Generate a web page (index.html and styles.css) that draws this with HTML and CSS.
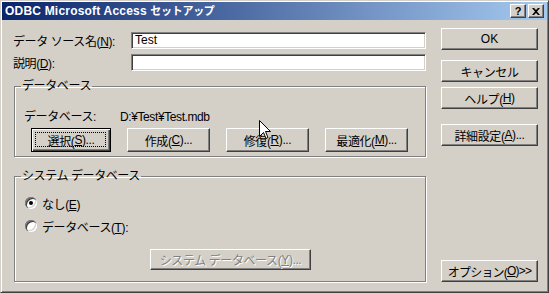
FILE: index.html
```html
<!DOCTYPE html>
<html lang="ja">
<head>
<meta charset="utf-8">
<title>ODBC Microsoft Access セットアップ</title>
<link rel="stylesheet" href="styles.css">
</head>
<body>
<div class="window">
  <div class="titlebar">
    <span class="title">ODBC Microsoft Access <span class="title-jp">セットアップ</span></span>
    <div class="tbtns">
      <span class="tbtn tbtn-help">?</span>
      <span class="tbtn"><svg width="8" height="7" viewBox="0 0 8 7"><path d="M0 0h2l2 2 2-2h2L5 3.5 8 7H6L4 5 2 7H0l3-3.5z" fill="#000"/></svg></span>
    </div>
  </div>
  <div class="client">
    <div class="main">
      <div class="field f1"><span class="flabel">データ ソース名(<u>N</u>):</span><div class="edit">Test</div></div>
      <div class="field f2"><span class="flabel">説明(<u>D</u>):</span><div class="edit"></div></div>
      <fieldset class="group g1">
        <legend>データベース</legend>
        <div class="dbrow"><span class="dblabel">データベース:</span><span class="dbpath">D:¥Test¥Test.mdb</span></div>
        <div class="btnrow">
          <span class="btn default w80">選択(<u>S</u>)...</span>
          <span class="btn w83">作成(<u>C</u>)...</span>
          <span class="btn w83">修復(<u>R</u>)...</span>
          <span class="btn w83">最適化(<u>M</u>)...</span>
        </div>
      </fieldset>
      <fieldset class="group g2">
        <legend>システム データベース</legend>
        <div class="radio-row r1"><span class="radio checked"></span><span>なし(<u>E</u>)</span></div>
        <div class="radio-row r2"><span class="radio"></span><span>データベース(<u>T</u>):</span></div>
        <span class="btn disabled sysdb">システム データベース(<u>Y</u>)...</span>
      </fieldset>
    </div>
    <div class="side">
      <span class="btn sb ok">OK</span>
      <span class="btn sb cancel">キャンセル</span>
      <span class="btn sb help">ヘルプ(<u>H</u>)</span>
      <span class="btn sb adv">詳細設定(<u>A</u>)...</span>
      <span class="btn sb opt">オプション(<u>O</u>)&gt;&gt;</span>
    </div>
  </div>
  <svg class="cursor" width="12" height="20" viewBox="0 0 12 20"><path d="M0.5 0.5V16.5L4.5 12.5L7 18.5L9 17.5L6.5 11.5H11.5Z" fill="#fff" stroke="#000" stroke-width="1" stroke-linejoin="miter"/></svg>
</div>
</body>
</html>
```

FILE: styles.css
```css
html, body {
  margin: 0;
  padding: 0;
  background: #d4d0c8;
}
body {
  font-family: "Liberation Sans", "Noto Sans CJK JP", sans-serif;
  font-size: 12px;
  color: #000;
}
u { text-decoration: underline; text-underline-offset: 1px; }

.window {
  position: relative;
  box-sizing: border-box;
  width: 549px;
  height: 293px;
  background: #d4d0c8;
  border: 1px solid;
  border-color: #d4d0c8 #404040 #404040 #d4d0c8;
  box-shadow: inset 1px 1px 0 #fff, inset -1px -1px 0 #808080;
  padding: 1px;
  overflow: hidden;
}

.titlebar {
  height: 18px;
  display: flex;
  align-items: center;
  justify-content: space-between;
  background: linear-gradient(to right, #0a246a, #a6caf0);
  color: #fff;
}
.title {
  font-family: "Liberation Sans", "Noto Sans CJK JP", sans-serif;
  font-weight: bold;
  font-size: 12px;
  padding-left: 3px;
  white-space: nowrap;
  line-height: 18px;
  letter-spacing: 0.2px;
}
.title-jp { font-size: 11px; letter-spacing: -0.3px; }
.tbtns {
  display: flex;
  gap: 2px;
  margin-right: 3px;
}
.tbtn {
  box-sizing: border-box;
  width: 16px;
  height: 14px;
  display: flex;
  align-items: center;
  justify-content: center;
  background: #d4d0c8;
  border: 1px solid;
  border-color: #fff #404040 #404040 #fff;
  box-shadow: inset -1px -1px 0 #808080;
  color: #000;
}
.tbtn-help {
  font-family: "Liberation Sans", sans-serif;
  font-weight: bold;
  font-size: 11px;
  line-height: 12px;
}

.client {
  display: flex;
  letter-spacing: -0.4px;
}
.main {
  margin-left: 11px;
  width: 413px;
}
.side {
  margin-left: 15px;
  width: 97px;
  display: flex;
  flex-direction: column;
}

.field {
  display: flex;
  align-items: center;
  height: 17px;
}
.f1 { margin-top: 12px; }
.f2 { margin-top: 5px; }
.flabel {
  width: 118px;
  white-space: nowrap;
}
.edit {
  box-sizing: border-box;
  width: 295px;
  height: 17px;
  background: #fff;
  border: 1px solid;
  border-color: #808080 #fff #fff #808080;
  box-shadow: inset 1px 1px 0 #404040, inset -1px -1px 0 #d4d0c8;
  padding: 0 3px;
  line-height: 15px;
  letter-spacing: 0;
}

.group {
  margin: 0;
  padding: 0;
  min-width: 0;
  margin-left: 1px;
  width: 412px;
  box-sizing: border-box;
  border: 1px solid #808080;
  box-shadow: inset 1px 1px 0 #fff, 1px 1px 0 #fff;
}
.group legend {
  margin-left: 6px;
  padding: 0 1px;
  line-height: 14px;
  height: 14px;
}
.g1 { margin-top: 8px; padding-bottom: 4px; }
.g2 { margin-top: 12px; padding-bottom: 11px; }

.dbrow {
  display: flex;
  margin-top: 17px;
  padding-left: 9px;
  line-height: 14px;
  height: 14px;
}
.dblabel { width: 96px; }
.btnrow {
  display: flex;
  gap: 16px;
  margin-top: 4px;
  padding-left: 16px;
}

.btn {
  position: relative;
  box-sizing: border-box;
  display: flex;
  align-items: center;
  justify-content: center;
  height: 22px;
  background: #d4d0c8;
  border: 1px solid;
  border-color: #fff #404040 #404040 #fff;
  box-shadow: inset -1px -1px 0 #808080, inset 1px 1px 0 #d4d0c8;
  white-space: nowrap;
}
.btnrow .btn { height: 24px; }
.w80 { width: 80px; }
.w83 { width: 83px; }
.btn.default {
  border: 1px solid #000;
  box-shadow: inset 1px 1px 0 #fff, inset -1px -1px 0 #404040, inset -2px -2px 0 #808080;
}
.btn.default::after {
  content: "";
  position: absolute;
  inset: 3px 4px 4px 3px;
  border: 1px dotted #000;
}
.btn.disabled {
  color: #808080;
  text-shadow: 1px 1px 0 #fff;
}

.radio-row {
  display: flex;
  align-items: center;
  gap: 5px;
  padding-left: 10px;
  height: 14px;
}
.r1 { margin-top: 13px; }
.r2 { margin-top: 9px; }
.radio {
  position: relative;
  width: 12px;
  height: 12px;
  border-radius: 50%;
  background: #fff;
  box-shadow: inset 1px 1px 0 #808080, inset 2px 2px 0 #404040, inset -1px -1px 0 #fff, inset -2px -2px 0 #d4d0c8;
}
.radio.checked::after {
  content: "";
  position: absolute;
  left: 4px;
  top: 4px;
  width: 4px;
  height: 4px;
  border-radius: 50%;
  background: #000;
}
.sysdb {
  margin-top: 16px;
  margin-left: 135px;
  width: 161px;
  height: 21px;
}

.sb { width: 97px; }
.ok { margin-top: 8px; letter-spacing: 0; }
.cancel { margin-top: 10px; }
.help { margin-top: 5px; }
.adv { margin-top: 15px; }
.opt { margin-top: 114px; letter-spacing: -0.8px; }

.cursor {
  position: absolute;
  left: 258px;
  top: 119px;
}
```
